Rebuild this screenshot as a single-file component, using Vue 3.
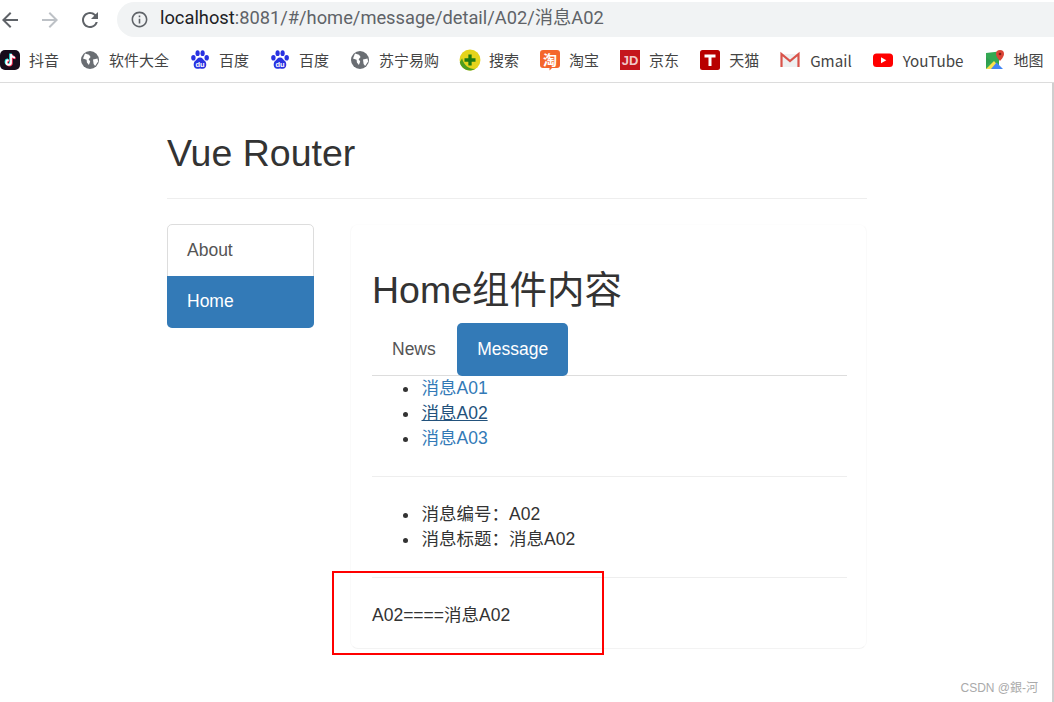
<script setup>
const bookmarks = [
  { icon: 'tiktok', label: '抖音' },
  { icon: 'globe', label: '软件大全' },
  { icon: 'baidu', label: '百度' },
  { icon: 'baidu', label: '百度' },
  { icon: 'globe', label: '苏宁易购' },
  { icon: 'so', label: '搜索' },
  { icon: 'taobao', label: '淘宝' },
  { icon: 'jd', label: '京东' },
  { icon: 'tmall', label: '天猫' },
  { icon: 'gmail', label: 'Gmail', latin: true },
  { icon: 'youtube', label: 'YouTube', latin: true },
  { icon: 'maps', label: '地图' }
]

const messages = [
  { id: 'A01', title: '消息A01' },
  { id: 'A02', title: '消息A02', active: true },
  { id: 'A03', title: '消息A03' }
]
</script>

<template>
  <div class="page">
    <header class="browser">
      <div class="toolbar">
        <svg class="nav-icon back" viewBox="0 0 24 24"><path d="M20 11H7.83l5.59-5.59L12 4l-8 8 8 8 1.41-1.41L7.83 13H20v-2z" /></svg>
        <svg class="nav-icon forward" viewBox="0 0 24 24"><path d="M12 4l-1.41 1.41L16.17 11H4v2h12.17l-5.58 5.59L12 20l8-8z" /></svg>
        <svg class="nav-icon reload" viewBox="0 0 24 24"><path d="M17.65 6.35A7.958 7.958 0 0012 4c-4.42 0-7.99 3.58-7.99 8s3.57 8 7.99 8c3.73 0 6.84-2.55 7.73-6h-2.08A5.99 5.99 0 0112 18c-3.31 0-6-2.69-6-6s2.69-6 6-6c1.66 0 3.14.69 4.22 1.78L13 11h7V4l-2.35 2.35z" /></svg>
        <div class="omnibox">
          <svg class="info" viewBox="0 0 24 24"><path d="M11 7h2v2h-2zm0 4h2v6h-2zm1-9C6.48 2 2 6.48 2 12s4.48 10 10 10 10-4.48 10-10S17.52 2 12 2zm0 18c-4.41 0-8-3.59-8-8s3.59-8 8-8 8 3.59 8 8-3.59 8-8 8z" /></svg>
          <span class="url"><span class="host">localhost</span>:8081/#/home/message/detail/A02/消息A02</span>
        </div>
      </div>
      <div class="bookmarks">
        <div class="bookmark" :class="{ latin: b.latin }" v-for="(b, i) in bookmarks" :key="i">
          <svg class="bm-icon" viewBox="0 0 20 20">
            <template v-if="b.icon === 'tiktok'">
              <rect width="20" height="20" rx="5" fill="#170b1a" />
              <path d="M11 4v8.500a2.300 2.300 0 1 1-2.300-2.300M11 4c.3 2.200 1.700 3.500 4 3.700" fill="none" stroke="#25f4ee" stroke-width="2.200" transform="translate(-.7 -.5)" />
              <path d="M11 4v8.500a2.300 2.300 0 1 1-2.300-2.300M11 4c.3 2.200 1.700 3.500 4 3.700" fill="none" stroke="#fe2c55" stroke-width="2.200" transform="translate(.7 .5)" />
              <path d="M11 4v8.500a2.300 2.300 0 1 1-2.300-2.300M11 4c.3 2.200 1.700 3.500 4 3.700" fill="none" stroke="#fff" stroke-width="1.800" />
            </template>
            <template v-else-if="b.icon === 'globe'">
              <circle cx="10" cy="10" r="9" fill="#6a6e73" />
              <path d="M5 3.500l4 1.200 1.600 2.400-2 2.200 1.600 2.200-1.300 3.500-2-2.600-.3-2.600L3 8.500zM13 9.500l4.500-1 .6 3-3 4.500-1.500-2z" fill="#fff" />
            </template>
            <template v-else-if="b.icon === 'baidu'">
              <g fill="#2932e1">
                <ellipse cx="3.400" cy="7.800" rx="2.200" ry="2.800" />
                <ellipse cx="7.600" cy="3.200" rx="2.100" ry="2.900" />
                <ellipse cx="12.600" cy="3.200" rx="2.100" ry="2.900" />
                <ellipse cx="16.700" cy="7.800" rx="2.200" ry="2.800" />
                <path d="M10 7.500c2.400 0 3.300 2.200 4.900 3.500 2.200 1.800 2 7.500-2 7.800-1.200.1-2-.4-2.900-.4s-1.700.5-2.900.4c-4-.3-4.200-6-2-7.800C6.700 9.700 7.600 7.500 10 7.500z" />
              </g>
              <text x="10" y="16.500" class="bd-text">du</text>
            </template>
            <template v-else-if="b.icon === 'so'">
              <g transform="translate(-1 -1) scale(1.100)">
                <circle cx="10" cy="10" r="9.500" fill="#e5d41c" />
                <path d="M.7 12a9.500 9.500 0 0 0 14.500 6C10 18.500 5 16.500 2.800 8.500z" fill="#4f9e1f" />
                <path d="M8.500 5h3v3.500H15v3h-3.500V15h-3v-3.500H5v-3h3.500z" fill="#1f7a12" />
              </g>
            </template>
            <template v-else-if="b.icon === 'taobao'">
              <path d="M3 0h14a3 3 0 0 1 3 3v12a3 3 0 0 1-3 3h-5l-2.500 2.500V18H3a3 3 0 0 1-3-3V3a3 3 0 0 1 3-3z" fill="#f4662c" />
              <text x="10" y="15" class="tb-text">淘</text>
            </template>
            <template v-else-if="b.icon === 'jd'">
              <rect width="20" height="20" fill="#c5161d" />
              <text x="10" y="15" class="jd-text">JD</text>
            </template>
            <template v-else-if="b.icon === 'tmall'">
              <rect width="20" height="20" rx="2.500" fill="#b80000" />
              <path d="M4.500 4.500h11v3h-4V16h-3V7.500h-4z" fill="#fff" />
            </template>
            <template v-else-if="b.icon === 'gmail'">
              <path d="M1.500 4h17v13h-17z" fill="#eef0f1" />
              <path d="M1.500 17V4l8.500 7 8.500-7v13" fill="none" stroke="#d9534a" stroke-width="2.200" />
            </template>
            <template v-else-if="b.icon === 'youtube'">
              <rect y="3.500" width="20" height="13.500" rx="3.500" fill="#f00" />
              <path d="M8 7.300l5.300 3-5.300 3z" fill="#fff" />
            </template>
            <template v-else>
              <path d="M1 3l13-1.500V17L1 19z" fill="#34a853" />
              <path d="M1 19l8-8 7 8z" fill="#fbe14c" />
              <path d="M6 19l5.500-6.500L18 19z" fill="#4285f4" />
              <path d="M1 7l5 4-5 5z" fill="#2f9e4f" />
              <path d="M15 0a4 4 0 0 1 4 4c0 3-4 7-4 7s-4-4-4-7a4 4 0 0 1 4-4z" fill="#db4437" />
              <circle cx="15" cy="4" r="1.300" fill="#7a1c14" />
            </template>
          </svg>
          <span class="bm-label">{{ b.label }}</span>
        </div>
      </div>
    </header>

    <main class="viewport">
      <div class="container">
        <div class="page-header">
          <h2>Vue Router</h2>
        </div>
        <div class="row">
          <nav class="side-nav">
            <a class="side-link" href="#">About</a>
            <a class="side-link active" href="#">Home</a>
          </nav>
          <section class="panel">
            <h2 class="panel-title">Home组件内容</h2>
            <ul class="tabs">
              <li><a class="tab" href="#">News</a></li>
              <li><a class="tab active" href="#">Message</a></li>
            </ul>
            <ul class="list">
              <li v-for="m in messages" :key="m.id">
                <a class="msg-link" :class="{ active: m.active }" href="#">{{ m.title }}</a>
              </li>
            </ul>
            <hr />
            <ul class="list">
              <li>消息编号：A02</li>
              <li>消息标题：消息A02</li>
            </ul>
            <hr />
            <p class="result">A02====消息A02</p>
          </section>
        </div>
      </div>
      <div class="highlight"></div>
      <div class="watermark">CSDN @銀-河</div>
    </main>
  </div>
</template>

<style>
html,
body {
  margin: 0;
  overflow: hidden;
  background: #fff;
}
</style>

<style scoped>
* {
  box-sizing: border-box;
}

.page {
  height: 702px;
  display: flex;
  flex-direction: column;
  font-family: "Liberation Sans", "Noto Sans CJK SC", sans-serif;
  color: #333;
}

.browser {
  height: 83px;
  flex: none;
  border-bottom: 1px solid #dcdcdc;
}

.toolbar {
  height: 37px;
  padding-top: 2px;
  display: flex;
  align-items: center;
}

.nav-icon {
  width: 24px;
  height: 24px;
  flex: none;
  fill: #5f6368;
}

.back {
  margin-left: -2px;
}

.forward {
  margin-left: 16px;
  fill: #bdc1c6;
}

.reload {
  margin-left: 16px;
}

.omnibox {
  flex: 1;
  height: 35px;
  margin-left: 15px;
  margin-right: -40px;
  padding-left: 13px;
  display: flex;
  align-items: center;
  background: #f1f3f4;
  border-radius: 18px;
}

.info {
  width: 19px;
  height: 19px;
  fill: #5f6368;
}

.url {
  margin-left: 11px;
  margin-bottom: 3px;
  font-family: Roboto, "Noto Sans CJK SC", sans-serif;
  font-size: 18.3px;
  line-height: 24px;
  color: #5f6368;
  white-space: nowrap;
}

.host {
  color: #202124;
}

.bookmarks {
  height: 45px;
  display: flex;
  align-items: center;
  gap: 21px;
  white-space: nowrap;
}

.bookmark {
  display: flex;
  align-items: center;
  gap: 9px;
}

.bookmark.latin {
  gap: 10px;
}

.bm-icon {
  width: 20px;
  height: 20px;
  flex: none;
  overflow: visible;
}

.bm-label {
  font-family: "Noto Sans CJK SC", sans-serif;
  font-size: 15px;
  line-height: 20px;
  color: #444;
}

.latin .bm-label {
  font-size: 15.2px;
}

.bd-text {
  font: bold 7.5px "Liberation Sans", sans-serif;
  fill: #fff;
  text-anchor: middle;
}

.tb-text {
  font: bold 14px "Noto Sans CJK SC", sans-serif;
  fill: #fff;
  text-anchor: middle;
}

.jd-text {
  font: bold 13px "Liberation Sans", sans-serif;
  fill: #f2c9c9;
  text-anchor: middle;
}

.viewport {
  flex: 1;
  position: relative;
  border-right: 2px solid #cfcfcf;
}

.container {
  width: 700px;
  margin-left: 167px;
}

.page-header {
  height: 116px;
  padding-top: 44px;
  border-bottom: 1px solid #eee;
}

h2 {
  margin: 0;
  font-weight: 400;
  font-size: 37.5px;
  line-height: 52px;
  color: #333;
}

.row {
  margin-top: 25px;
  display: flex;
  gap: 36px;
}

.side-nav {
  width: 147px;
  height: 104px;
  flex: none;
  display: flex;
  flex-direction: column;
  border: 1px solid #ddd;
  border-radius: 5px;
}

.side-link {
  height: 51px;
  padding: 0 19px;
  display: flex;
  align-items: center;
  font-size: 17.5px;
  color: #555;
  text-decoration: none;
}

.side-link.active {
  margin: 0 -1px -1px;
  height: 52px;
  padding: 0 0 1px 20px;
  background: #337ab7;
  color: #fff;
  border-radius: 0 0 5px 5px;
}

.panel {
  width: 517px;
  padding: 40px 19px 20px 21px;
  border: 1px solid;
  border-color: #fdfdfd #fafafa #f3f3f3;
  border-radius: 8px;
}

.panel-title {
  height: 58px;
  line-height: 50px;
}

.tabs {
  margin: 0;
  padding: 0;
  list-style: none;
  display: flex;
  height: 53px;
  border-bottom: 1px solid #ddd;
}

.tabs li + li {
  margin-left: 1px;
}

.tab {
  height: 53px;
  padding: 0 20px;
  display: flex;
  align-items: center;
  font-size: 17.5px;
  color: #555;
  text-decoration: none;
  border-radius: 5px;
}

.tab.active {
  padding: 0 19.5px 0 20.5px;
  background: #337ab7;
  color: #fff;
}

.list {
  margin: 0;
  padding-left: 49.500px;
  list-style: none;
  font-size: 17.5px;
  line-height: 25px;
}

.list li {
  position: relative;
}

.list li::before {
  content: "";
  position: absolute;
  left: -19px;
  top: 11px;
  width: 5px;
  height: 5px;
  border-radius: 50%;
  background: #333;
}

.msg-link {
  color: #337ab7;
  text-decoration: none;
}

.msg-link.active {
  color: #23527c;
  text-decoration: underline;
}

hr {
  margin: 25px 0;
  border: 0;
  border-top: 1px solid #eee;
}

.result {
  margin: 0;
  font-size: 17.5px;
  line-height: 25px;
}

.highlight {
  position: absolute;
  left: 332px;
  top: 488px;
  width: 272px;
  height: 84px;
  border: 2px solid #f00;
}

.watermark {
  position: absolute;
  right: 14px;
  bottom: 7px;
  font-size: 12px;
  color: #aaa;
}
</style>
